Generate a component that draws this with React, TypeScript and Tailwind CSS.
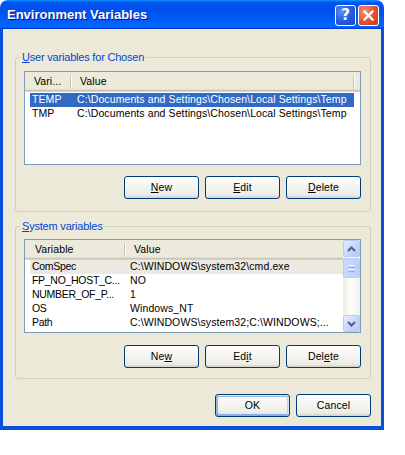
import React from "react";

function Btn({ children, def }: { children: React.ReactNode; def?: boolean }) {
  return (
    <div
      className={
        def
          ? "w-[75px] h-[23px] rounded-[3px] border border-[#003c74] flex items-center justify-center text-black bg-[linear-gradient(180deg,#ffffff,#ecebe6_86%,#d6d0c5)] shadow-[inset_-1px_1px_#cee7ff,inset_1px_2px_#98b8ea,inset_-2px_2px_#bcd4f6,inset_1px_-1px_#89ade4,inset_2px_-2px_#89ade4]"
          : "w-[75px] h-[23px] rounded-[3px] border border-[#003c74] flex items-center justify-center text-black bg-[linear-gradient(180deg,#ffffff,#ecebe6_86%,#d6d0c5)]"
      }
    >
      <span className="leading-[13px]">{children}</span>
    </div>
  );
}

function Divider() {
  return <div className="w-[2px] h-[14px] self-center border-l border-l-[#c7c5b2] border-r border-r-white shrink-0" />;
}

const headerCls =
  "h-[20px] flex items-stretch bg-[#ebeadb] shadow-[inset_0_-1px_0_#d6d2c2,inset_0_-2px_0_#cbc7b8,inset_0_-3px_0_#e2decd] shrink-0";

function ScrollBtn({ up }: { up?: boolean }) {
  return (
    <div className="h-[17px] w-[17px] rounded-[2px] border border-[#b9cbf3] bg-[linear-gradient(135deg,#e3ebfe,#c4d5fc_60%,#b5c9f7)] flex items-center justify-center shrink-0">
      <svg width="9" height="6" viewBox="0 0 9 6">
        {up ? (
          <path d="M1 5 L4.5 1.5 L8 5" fill="none" stroke="#4d6185" strokeWidth="2" />
        ) : (
          <path d="M1 1 L4.5 4.5 L8 1" fill="none" stroke="#4d6185" strokeWidth="2" />
        )}
      </svg>
    </div>
  );
}

function Scrollbar() {
  return (
    <div className="w-[17px] flex flex-col bg-[linear-gradient(90deg,#eeede5,#fdfdfa_40%,#f3f1ec)] shrink-0">
      <ScrollBtn up />
      <div className="h-[20px] mt-[1px] rounded-[2px] border border-[#b9cbf3] bg-[linear-gradient(90deg,#c9d8fd,#bacffb)] flex flex-col items-center justify-center gap-[1px]">
        <div className="w-[7px] h-[1px] bg-[#eef4fe]" />
        <div className="w-[7px] h-[1px] bg-[#8cb0f8]" />
        <div className="w-[7px] h-[1px] bg-[#eef4fe]" />
        <div className="w-[7px] h-[1px] bg-[#8cb0f8]" />
      </div>
      <div className="flex-1" />
      <ScrollBtn />
    </div>
  );
}

export default function App() {
  return (
    <div className="w-[405px] h-[455px] bg-white font-['Liberation_Sans',Tahoma,sans-serif] text-[10.5px] tracking-[0.1px] text-black">
      <div className="w-[384px] h-[430px] flex flex-col">
        {/* Title bar */}
        <div className="h-[29px] rounded-t-[8px] flex items-center pl-[7px] pr-[5px] bg-[linear-gradient(180deg,#0997ff,#0053ee_8%,#0050ee_40%,#0066ff_88%,#0066ff_93%,#005bff_95%,#003dd7_96%,#003dd7)] shrink-0">
          <span className="text-white font-bold text-[13px] tracking-[0px] [text-shadow:1px_1px_#0f1089] mt-[1px]">
            Environment Variables
          </span>
          <div className="ml-auto flex gap-[2px] mt-[1px]">
            <div className="w-[21px] h-[21px] rounded-[3px] border border-white bg-[radial-gradient(circle_at_30%_30%,#5a8ff5,#2258e0_55%,#1c49c8)] flex items-center justify-center">
              <span className="text-white font-bold text-[15px] leading-none tracking-[0px] font-['DejaVu_Sans',sans-serif]">?</span>
            </div>
            <div className="w-[21px] h-[21px] rounded-[3px] border border-white bg-[radial-gradient(circle_at_30%_30%,#f1947a,#e0512f_55%,#c7381c)] flex items-center justify-center">
              <svg width="11" height="11" viewBox="0 0 11 11">
                <path d="M1.5 1.5 L9.5 9.5 M9.5 1.5 L1.5 9.5" stroke="white" strokeWidth="2.2" strokeLinecap="square" />
              </svg>
            </div>
          </div>
        </div>

        {/* Client area */}
        <div className="flex-1 bg-[#ece9d8] border-l-[3px] border-r-[3px] border-b-[4px] border-[#0a4fdc] pl-[12px] pr-[10px] pt-[28px] flex flex-col">
          {/* Group 1 */}
          <div className="relative border border-[#d0d0bf] rounded-[3px] pt-[13px] pl-[8px] pr-[9px] pb-[12px]">
            <div className="absolute left-[4px] top-[-7px] px-[2px] bg-[#ece9d8] text-[#0046d5] leading-[13px] text-[11px] tracking-[-0.2px]">
              <span className="underline">U</span>ser variables for Chosen
            </div>
            <div className="h-[94px] border border-[#7f9db9] bg-white flex flex-col overflow-hidden">
              <div className={headerCls}>
                <div className="w-[45px] pl-[9px] flex items-center shrink-0 whitespace-nowrap">Vari...</div>
                <Divider />
                <div className="w-[281px] pl-[8px] flex items-center shrink-0">Value</div>
                <Divider />
                <div className="flex-1" />
              </div>
              <div className="pl-[5px] pt-[1px]">
                <div className="w-[324px] h-[14px] flex items-center bg-[#316ac5] text-white whitespace-nowrap">
                  <div className="w-[41px] pl-[2px] shrink-0">TEMP</div>
                  <div className="pl-[6px]">C:\Documents and Settings\Chosen\Local Settings\Temp</div>
                </div>
                <div className="w-[324px] h-[14px] flex items-center whitespace-nowrap">
                  <div className="w-[41px] pl-[2px] shrink-0">TMP</div>
                  <div className="pl-[6px]">C:\Documents and Settings\Chosen\Local Settings\Temp</div>
                </div>
              </div>
            </div>
            <div className="mt-[11px] flex justify-end gap-[6px]">
              <Btn>
                <span className="underline">N</span>ew
              </Btn>
              <Btn>
                <span className="underline">E</span>dit
              </Btn>
              <Btn>
                <span className="underline">D</span>elete
              </Btn>
            </div>
          </div>

          {/* Group 2 */}
          <div className="relative mt-[14px] border border-[#d0d0bf] rounded-[3px] pt-[12px] pl-[8px] pr-[9px] pb-[10px]">
            <div className="absolute left-[4px] top-[-7px] px-[2px] bg-[#ece9d8] text-[#0046d5] leading-[13px] text-[11px] tracking-[-0.2px]">
              <span className="underline">S</span>ystem variables
            </div>
            <div className="h-[94px] border border-[#7f9db9] bg-white flex overflow-hidden">
              <div className="flex-1 flex flex-col min-w-0">
                <div className={headerCls}>
                  <div className="w-[99px] pl-[10px] flex items-center shrink-0">Variable</div>
                  <Divider />
                  <div className="flex-1 pl-[8px] flex items-center">Value</div>
                </div>
                <div className="pl-[5px]">
                  {[
                    ["ComSpec", "C:\\WINDOWS\\system32\\cmd.exe", true],
                    ["FP_NO_HOST_C...", "NO", false],
                    ["NUMBER_OF_P...", "1", false],
                    ["OS", "Windows_NT", false],
                    ["Path", "C:\\WINDOWS\\system32;C:\\WINDOWS;...", false],
                  ].map(([k, v, sel]) => (
                    <div
                      key={k as string}
                      className={
                        sel
                          ? "h-[14px] flex items-center whitespace-nowrap bg-[#ebe9e1]"
                          : "h-[14px] flex items-center whitespace-nowrap"
                      }
                    >
                      <div className="w-[95px] pl-[2px] shrink-0 tracking-[-0.3px] overflow-hidden">{k as string}</div>
                      <div className="pl-[5px]">{v as string}</div>
                    </div>
                  ))}
                </div>
              </div>
              <Scrollbar />
            </div>
            <div className="mt-[12px] flex justify-end gap-[6px]">
              <Btn>
                Ne<span className="underline">w</span>
              </Btn>
              <Btn>
                Ed<span className="underline">i</span>t
              </Btn>
              <Btn>
                Del<span className="underline">e</span>te
              </Btn>
            </div>
          </div>

          {/* OK / Cancel */}
          <div className="mt-[15px] flex justify-end gap-[6px]">
            <Btn def>OK</Btn>
            <Btn>Cancel</Btn>
          </div>
        </div>
      </div>
    </div>
  );
}
